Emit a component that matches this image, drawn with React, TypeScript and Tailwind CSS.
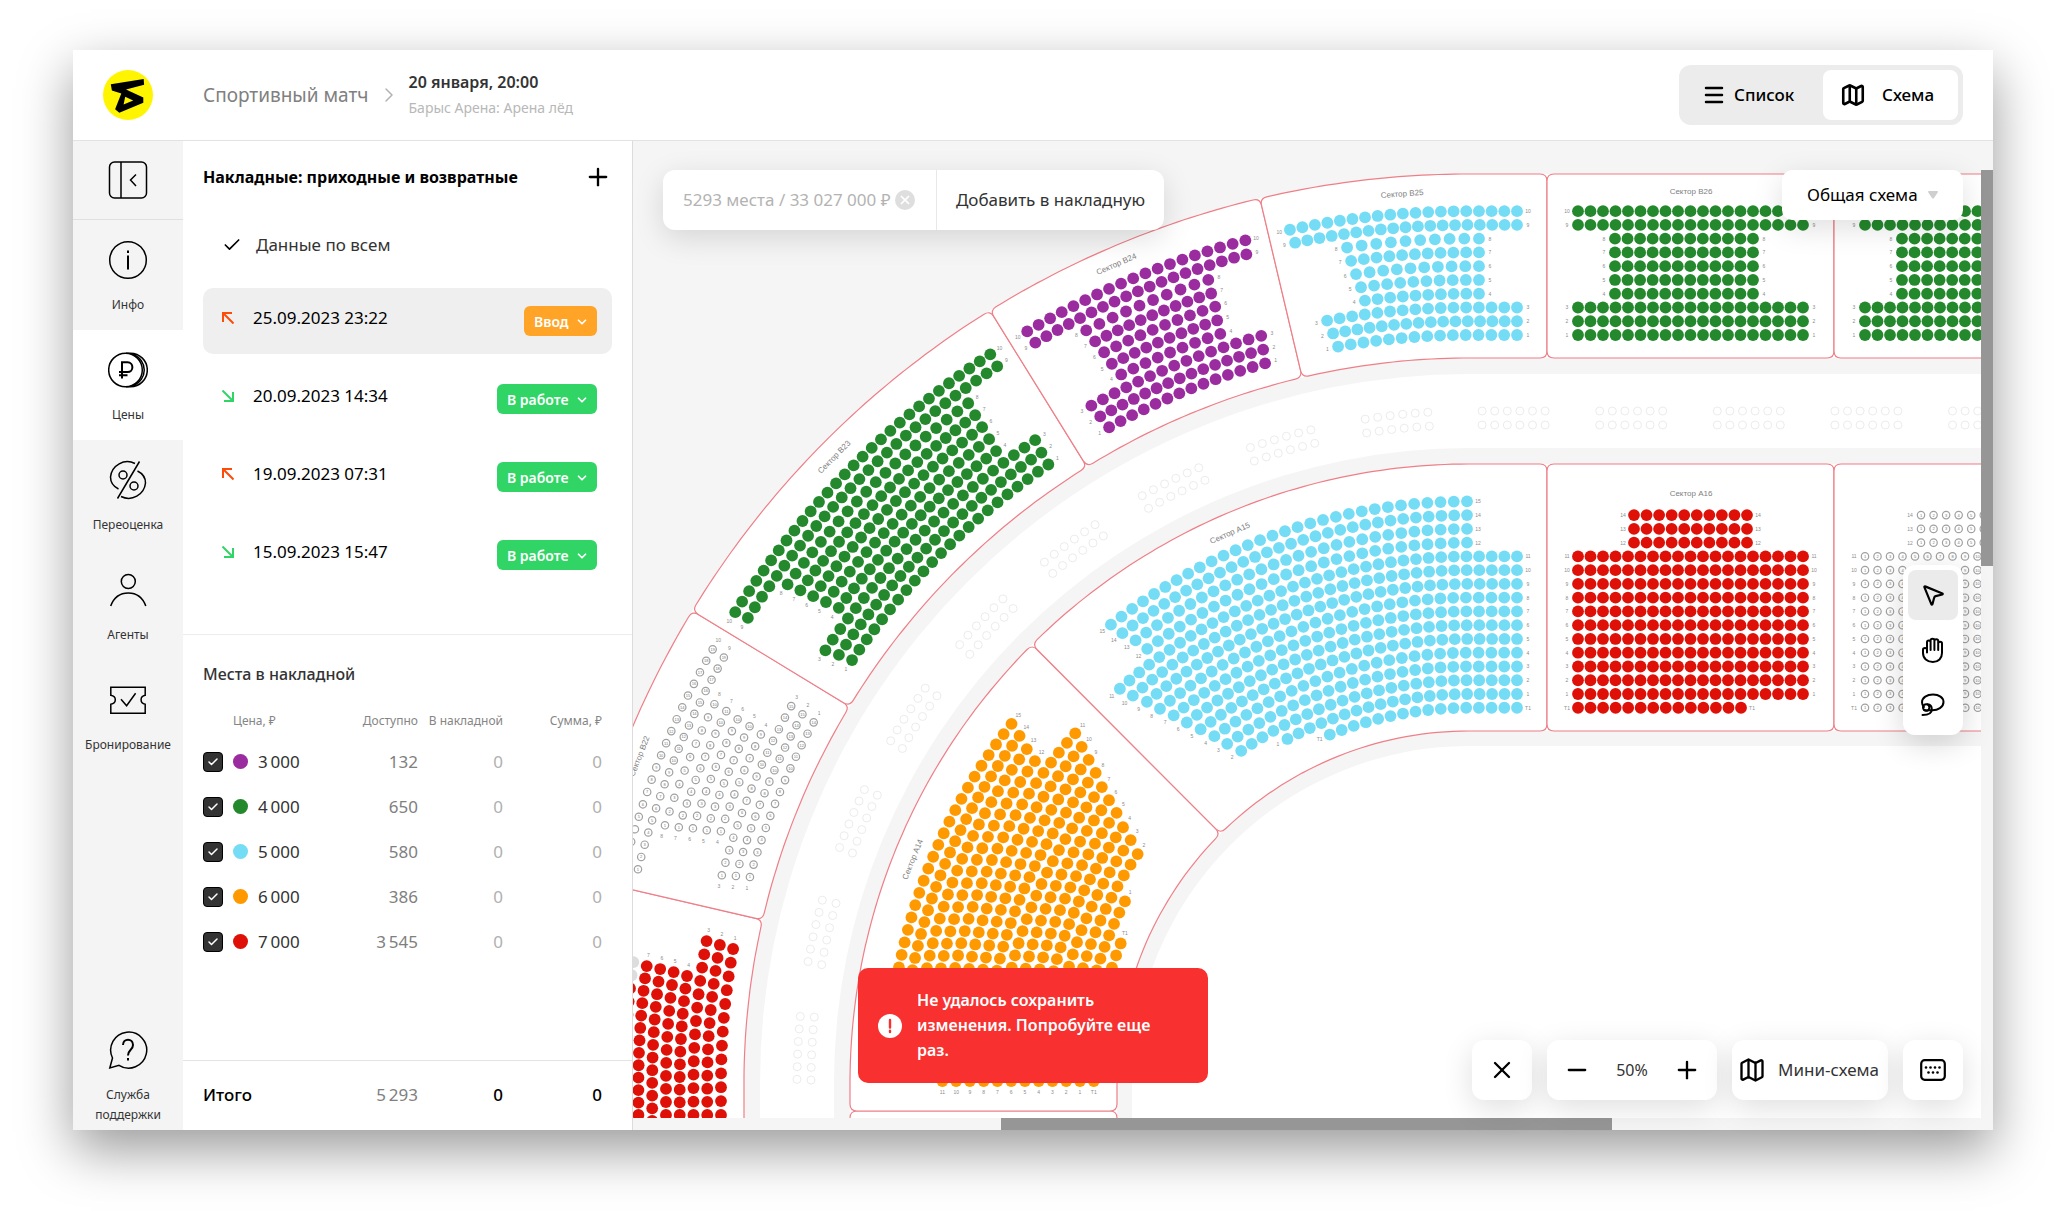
import type { ReactNode } from "react";
import { Check, ChevronDown, ChevronRight, Map as MapIcon, Menu, Minus, MousePointer2, Plus, X } from "lucide-react";

/* ---------- arena geometry ---------- */

// Centre of the top left bend. Past it the rows run straight right, below it straight down.
const CX = 1469;
const CY = 1083;

// Part of the arena that is scrolled into view
const VIEW = { left: 633, top: 141, right: 1981, bottom: 1118 };

type Point = [number, number];

const inView = ([x, y]: Point, margin: number) =>
  x > VIEW.left - margin && x < VIEW.right + margin && y < VIEW.bottom + margin;

// Distance along a row of radius r. 0 is the start of the bend, quarter(r) is its end.
const quarter = (r: number) => (Math.PI / 2) * r;

// u: 0..90 are degrees on the bend, values outside are pixels on the straight parts
const along = (u: number, r: number) => {
  if (u < 0) return u;
  if (u <= 90) return (u * Math.PI * r) / 180;
  return quarter(r) + u - 90;
};

const at = (s: number, r: number): Point => {
  const q = quarter(r);
  if (s < 0) return [CX - r, CY - s];
  if (s > q) return [CX + s - q, CY - r];
  return [CX - r * Math.cos(s / r), CY - r * Math.sin(s / r)];
};

const locate = (x: number, y: number, r: number) => {
  if (x >= CX) return quarter(r) + x - CX;
  if (y >= CY) return CY - y;
  return Math.atan2(CY - y, CX - x) * r;
};

const fmt = ([x, y]: Point) => `${x.toFixed(1)} ${y.toFixed(1)}`;

function arc(from: number, to: number, r: number) {
  const steps = Math.max(1, Math.ceil(Math.abs(to - from) / 8));
  return Array.from({ length: steps + 1 }, (_, i) => fmt(at(from + ((to - from) * i) / steps, r)));
}

function sectorPath(u1: number, u2: number, inner: number, outer: number) {
  const c = 7;
  const top = arc(along(u1, outer) + c, along(u2, outer) - c, outer);
  const bottom = arc(along(u2, inner) - c, along(u1, inner) + c, inner);
  const p = (u: number, r: number) => fmt(at(along(u, r), r));
  return [
    `M${top.join("L")}`,
    `Q${p(u2, outer)} ${p(u2, outer - c)}`,
    `L${p(u2, inner + c)}`,
    `Q${p(u2, inner)} ${bottom[0]}`,
    `L${bottom.join("L")}`,
    `Q${p(u1, inner)} ${p(u1, inner + c)}`,
    `L${p(u1, outer - c)}`,
    `Q${p(u1, outer)} ${top[0]}Z`,
  ].join("");
}

const zonePath = (r: number) => `M${CX - r} 3000V${CY}A${r} ${r} 0 0 1 ${CX} ${CY - r}H5000V3000Z`;

const ZONES = [
  { r: 909, fill: "#ffffff" },
  { r: 725, fill: "#f5f5f5" },
  { r: 709, fill: "#ffffff" },
  { r: 635, fill: "#f5f5f5" },
  { r: 619, fill: "#ffffff" },
  { r: 352, fill: "#f5f5f5" },
  { r: 337, fill: "#ffffff" },
];

/* ---------- sectors ---------- */

const PURPLE = "#9b2c9f";
const GREEN = "#24892c";
const BLUE = "#74dcf4";
const ORANGE = "#ff9900";
const RED = "#de1007";

// row number, first seat x/y, last seat x/y, seats
type Row = [number, number, number, number, number, number?];

type Sector = {
  name: string;
  ring: "A" | "B";
  from: number;
  to: number;
  label?: [number, number];
  color?: string;
  rows: Row[];
};

const RINGS = {
  A: { inner: 352, outer: 619, firstRow: 389 },
  B: { inner: 725, outer: 909, firstRow: 748 },
};

const rowRadius = (ring: "A" | "B", row: number) => RINGS[ring].firstRow + (row - 1) * 13.76;

const straightB = (x: number): Row[] =>
  [10, 9, 8, 7, 6, 5, 4, 3, 2, 1].map((n) =>
    n > 8 || n < 4 ? [n, x, 0, x + 225, 0, 19] : [n, x + 37, 0, x + 175, 0, 12],
  );

const straightA = (x: number): Row[] =>
  Array.from({ length: 15 }, (_, n): Row => {
    if (n > 11) return [n, x + 56, 0, x + 169, 0, 10];
    if (n === 0) return [n, x, 0, x + 163, 0, 14];
    return [n, x, 0, x + 225, 0, 19];
  });

const SECTORS: Sector[] = [
  {
    name: "B21", ring: "B", from: -400, to: 13, color: RED,
    rows: [
      [8, 625, 1121, 633, 962, 13],
      [7, 638, 1115, 646, 966, 13], [6, 652, 1121, 660, 969, 13], [5, 666, 1115, 673, 972, 12],
      [4, 680, 1115, 687, 976, 12], [3, 694, 1115, 706, 941, 14], [2, 707, 1115, 720, 945, 14],
      [1, 721, 1115, 733, 949, 13],
    ],
  },
  {
    name: "B22", ring: "B", from: 13, to: 31.3, label: [21.5, 892],
    rows: [
      [10, 624, 867, 712, 649, 19], [9, 637, 869, 723, 657, 19], [8, 664, 825, 714, 704, 10],
      [7, 678, 827, 726, 711, 11], [6, 692, 828, 737, 719, 10], [5, 706, 830, 749, 726, 10],
      [4, 720, 831, 760, 734, 9], [3, 721, 875, 791, 706, 15], [2, 736, 876, 802, 714, 15],
      [1, 750, 877, 813, 722, 14],
    ],
  },
  {
    name: "B23", ring: "B", from: 31.3, to: 58.2, label: [44.6, 892], color: GREEN,
    rows: [
      [10, 735, 612, 990, 354, 30], [9, 748, 618, 997, 366, 29], [8, 787, 584, 968, 403, 20],
      [7, 800, 590, 975, 415, 21], [6, 813, 596, 982, 427, 20], [5, 826, 602, 989, 439, 19],
      [4, 839, 608, 996, 451, 19], [3, 825, 650, 1035, 440, 24], [2, 839, 655, 1041, 452, 24],
      [1, 852, 660, 1048, 464, 23],
    ],
  },
  {
    name: "B24", ring: "B", from: 58.2, to: 76.7, label: [66.7, 892], color: PURPLE,
    rows: [
      [10, 1027, 331, 1245, 239, 19], [9, 1035, 342, 1246, 253, 19], [8, 1086, 330, 1208, 279, 10],
      [7, 1095, 341, 1211, 293, 11], [6, 1104, 352, 1215, 306, 10], [5, 1112, 364, 1217, 320, 10],
      [4, 1121, 374, 1220, 333, 9], [3, 1091, 405, 1261, 335, 15], [2, 1100, 416, 1263, 349, 15],
      [1, 1109, 427, 1265, 363, 14],
    ],
  },
  {
    name: "B25", ring: "B", from: 76.7, to: 168, label: [85.7, 892], color: BLUE,
    rows: [
      [10, 1290, 230, 1517, 0, 19], [9, 1295, 242, 1517, 0, 19], [8, 1347, 247, 1479, 0, 10],
      [7, 1351, 260, 1479, 0, 11], [6, 1356, 274, 1479, 0, 10], [5, 1361, 287, 1479, 0, 10],
      [4, 1365, 301, 1479, 0, 10], [3, 1327, 320, 1517, 0, 16], [2, 1333, 333, 1517, 0, 16],
      [1, 1338, 346, 1517, 0, 15],
    ],
  },
  { name: "B26", ring: "B", from: 168, to: 455, label: [312, 892], color: GREEN, rows: straightB(1578) },
  { name: "B27", ring: "B", from: 455, to: 1800, color: GREEN, rows: straightB(1865) },
  { name: "A13", ring: "A", from: -400, to: -28, rows: [] },
  {
    name: "A14", ring: "A", from: -28, to: 45.1, label: [21.9, 600], color: ORANGE,
    rows: [
      [15, 887, 1031, 1013, 725, 27], [14, 901, 1031, 1021, 737], [13, 915, 1031, 1028, 750],
      [12, 929, 1031, 1036, 762], [11, 943, 1081, 1076, 734], [10, 956, 1081, 1083, 748],
      [9, 970, 1081, 1090, 761], [8, 984, 1081, 1097, 774], [7, 998, 1081, 1103, 788],
      [6, 1011, 1081, 1110, 801], [5, 1025, 1081, 1118, 814], [4, 1039, 1081, 1124, 828],
      [3, 1053, 1081, 1132, 841], [2, 1067, 1081, 1139, 855], [1, 1080, 1081, 1126, 902],
      [0, 1094, 1081, 1122, 944],
    ],
  },
  {
    name: "A15", ring: "A", from: 45.1, to: 168, label: [66.5, 600], color: BLUE,
    rows: [
      [15, 1112, 626, 1467, 501, 30], [14, 1123, 634, 1467, 515, 30], [13, 1136, 641, 1467, 529, 28],
      [12, 1148, 650, 1467, 543, 27], [11, 1121, 690, 1517, 0], [10, 1134, 697, 1517, 0],
      [9, 1148, 703, 1517, 0], [8, 1161, 710, 1517, 0], [7, 1175, 717, 1517, 0],
      [6, 1188, 724, 1517, 0], [5, 1202, 731, 1517, 0], [4, 1215, 737, 1517, 0],
      [3, 1228, 745, 1517, 0], [2, 1242, 752, 1517, 0], [1, 1288, 740, 1517, 0],
      [0, 1330, 735, 1517, 0],
    ],
  },
  { name: "A16", ring: "A", from: 168, to: 455, label: [312, 590], color: RED, rows: straightA(1578) },
  { name: "A17", ring: "A", from: 455, to: 1800, rows: straightA(1865) },
];

// Suites between the rings: six by two seats each
const SUITES = [
  ...Array.from({ length: 9 }, (_, i) => 83.8 - i * 10.1),
  ...Array.from({ length: 10 }, (_, i) => 134.6 + i * 117.6),
];

function SeatRow({ sector, row }: { sector: Sector; row: Row }) {
  const [n, x1, y1, x2, y2, seats] = row;
  const r = rowRadius(sector.ring, n);
  const s1 = locate(x1, y1, r);
  const s2 = locate(x2, y2, r);
  const count = seats ?? Math.round((s2 - s1) / 12.6) + 1;
  const name = n === 0 ? "T1" : String(n);
  return (
    <g>
      {Array.from({ length: count }, (_, i) => {
        const point = at(s1 + ((s2 - s1) * i) / (count - 1), r);
        const [x, y] = point;
        if (!inView(point, 6)) return null;
        if (sector.color) {
          // the last two seats of B21 row 8 are already sold
          const sold = sector.name === "B21" && n === 8 && i > count - 3;
          return <circle key={i} cx={x} cy={y} r={5.9} fill={sold ? "#dddddd" : sector.color} />;
        }
        return (
          <g key={i}>
            <circle cx={x} cy={y} r={3.7} fill="none" stroke="#a0a0a0" strokeWidth={1.2} />
            {inView(point, -3) && <text x={x} y={y + 1.4} fontSize={4} fill="#777777">{i + 1}</text>}
          </g>
        );
      })}
      {[at(s1 - 11, r), at(s2 + 11, r)].map((point, i) =>
        inView(point, -3) ? (
          <text key={i} x={point[0]} y={point[1] + 2} fontSize={5} fill="#8c8c8c">{name}</text>
        ) : null,
      )}
    </g>
  );
}

function SectorShape({ sector }: { sector: Sector }) {
  const { inner, outer } = RINGS[sector.ring];
  const label = sector.label;
  const [lx, ly] = label ? at(along(label[0], label[1]), label[1]) : [0, 0];
  return (
    <g>
      <path d={sectorPath(sector.from, sector.to, inner, outer)} fill="#ffffff" stroke="#ee7f88" strokeWidth={1.2} />
      {sector.rows.map((row) => <SeatRow key={row[0]} sector={sector} row={row} />)}
      {label && (
        <text x={lx} y={ly + 3} fontSize={8} fill="#808080" transform={`rotate(${Math.min(label[0], 90) - 90} ${lx} ${ly})`}>
          {`Сектор ${sector.name}`}
        </text>
      )}
    </g>
  );
}

function Arena() {
  return (
    <svg className="block h-full w-full font-['Liberation_Sans',sans-serif]" textAnchor="middle" role="img" aria-label="Схема зала">
      <g transform={`translate(${-VIEW.left} ${-VIEW.top})`}>
        {ZONES.map((z) => <path key={z.r} d={zonePath(z.r)} fill={z.fill} />)}
        {SUITES.map((u) =>
          [672, 658].map((r) =>
            [-2.5, -1.5, -0.5, 0.5, 1.5, 2.5].map((k) => {
              const [x, y] = at(along(u, r) + k * 12.6, r);
              return <circle key={`${u}-${r}-${k}`} cx={x} cy={y} r={4} fill="none" stroke="#ececec" />;
            }),
          ),
        )}
        {SECTORS.map((s) => <SectorShape key={s.name} sector={s} />)}
      </g>
    </svg>
  );
}

/* ---------- icons ---------- */

function NavIcon({ children }: { children: ReactNode }) {
  return (
    <svg viewBox="0 0 40 40" className="size-10" fill="none" stroke="#000" strokeWidth={1.5}>
      {children}
    </svg>
  );
}

const Logo = () => (
  <svg viewBox="0 0 50 50" className="size-[50px]">
    <circle cx="25" cy="25" r="25" fill="#fff500" />
    <path fillRule="evenodd" d="M7.8 14.3 40.7 9l.4 5.8L23 19.4l17.3 8v5.4l-24 10-4.2-3.5 6.2-15.8-9.4-3zM22.2 26.8l-1.6 7.6 9.6-4z" />
  </svg>
);

const HandIcon = () => (
  <svg viewBox="0 0 22 26" className="h-[26px] w-[22px]" fill="none" stroke="#000" strokeWidth={2} strokeLinecap="round">
    <path d="M5 15.500V5.200c0-2.200 3.600-2.200 3.600 0V13M8.600 5V3.300c0-2.100 3.800-2.100 3.800 0V13M12.400 3.800c0-2.100 3.800-2.100 3.800 0V13M16.200 6.500c0-2.200 3.800-2.200 3.800 0V16c0 5.200-3.600 9-9.200 9S1 21.500 1 16v-3.500c0-2 4-2 4 0" />
  </svg>
);

const LassoIcon = () => (
  <svg viewBox="0 0 24 24" className="size-6" fill="none" stroke="#000" strokeWidth={2} strokeLinecap="round">
    <path d="M10.500 17.200c6.500.3 12-3 12-8.200C22.500 4.500 18 1.500 12 1.500S1 4.500 1 9.300c0 1.800.7 3.400 1.900 4.700" />
    <circle cx="5.200" cy="14.500" r="3.200" />
    <path d="M3 16.800c2 1.200 4.500.4 7.500.4M6.500 11.300c3 .2 4.300 2.700 4.300 5.200 0 4-3.500 5.500-9.300 5.500" />
  </svg>
);

const KeyboardIcon = () => (
  <svg viewBox="0 0 26 22" className="h-[22px] w-[26px]">
    <rect x="1.200" y="1.200" width="23.600" height="19.600" rx="3.500" fill="none" stroke="#000" strokeWidth="2.200" />
    {[6, 10.5, 15, 19.5].map((x) => <circle key={x} cx={x} cy="8.500" r="1.300" />)}
    {[8.5, 13, 17.5].map((x) => <circle key={x} cx={x} cy="13.500" r="1.300" />)}
  </svg>
);

function Arrow({ type }: { type: "in" | "out" }) {
  return (
    <svg viewBox="0 0 12 12" className="size-3" fill="none" strokeWidth={2} stroke={type === "out" ? "#fc4c0a" : "#31d566"}>
      <path d={type === "out" ? "M11.500 11.500 1 1M1 10V1h9" : "M.5.5 11 11M11 2v9H2"} />
    </svg>
  );
}

/* ---------- sidebar ---------- */

const NAV = [
  {
    title: "Инфо",
    icon: <><circle cx="20" cy="20" r="18.300" /><path d="M20 15.500v14M20 10.500v2.500" strokeWidth={2} /></>,
  },
  {
    title: "Цены",
    active: true,
    icon: (
      <>
        <circle cx="17.500" cy="20" r="16.800" />
        <path d="M18 3.200h4.500a16.800 16.800 0 0 1 0 33.600H18M25 4.500c15 5.500 15 25.500 0 31" />
        <path d="M14 28.500V12.300h5.500c6.500 0 6.500 9.700 0 9.700H11M11 25.300h8.500" strokeWidth={2} />
      </>
    ),
  },
  {
    title: "Переоценка",
    icon: (
      <>
        <path d="M27 3.500A17 17 0 0 0 2.500 17c0 5 3 9.500 8 12M13 36.500A17 17 0 0 0 37.500 23c0-5-3-9.500-8-12M31.500 1.500l-22 37" />
        <circle cx="15" cy="15" r="4" />
        <circle cx="26" cy="26" r="4" />
      </>
    ),
  },
  {
    title: "Агенты",
    icon: <><circle cx="20.300" cy="11.500" r="7" /><path d="M2.700 36C6 27 13 23 20.300 23S34.500 27 37.800 36" /></>,
  },
  {
    title: "Бронирование",
    icon: (
      <>
        <path d="M2.800 7.300h34.400v8c-5.500 1-5.500 8 0 9v8.900H2.800v-8.900c6-1 6-8 0-9z" />
        <path d="m13 19.300 5.600 6.500 9-12.500" />
      </>
    ),
  },
];

function Sidebar() {
  return (
    <nav className="flex w-[110px] shrink-0 flex-col bg-[#f4f4f4] text-[12px] leading-5 text-[#333]">
      <button aria-label="Свернуть меню" className="flex h-[79px] shrink-0 items-center justify-center border-b border-[#e0e0e0]">
        <NavIcon>
          <rect x="1.500" y="2" width="37" height="36" rx="5" />
          <path d="M13 2v36M28 14.500 22.500 20l5.500 6" />
        </NavIcon>
      </button>
      {NAV.map((item) => (
        <a
          key={item.title}
          href="#"
          className={`flex h-[110px] shrink-0 flex-col items-center gap-[15px] pt-5 ${item.active ? "bg-white" : ""}`}
        >
          <NavIcon>{item.icon}</NavIcon>
          {item.title}
        </a>
      ))}
      <a href="#" className="mt-auto flex flex-col items-center gap-[15px] pb-[5px] text-center">
        <NavIcon>
          <path d="m4.500 28-2.700 10 9.200-2.700A18 18 0 1 0 4.500 28z" />
          <path d="M15 15c0-7 10-7 10 0 0 5-5 4.500-5 10.500M20 28v2.500" strokeWidth={2} />
        </NavIcon>
        <span className="w-20">Служба поддержки</span>
      </a>
    </nav>
  );
}

/* ---------- invoices panel ---------- */

const INVOICES = [
  { date: "25.09.2023 23:22", type: "out", status: "Ввод" },
  { date: "20.09.2023 14:34", type: "in", status: "В работе" },
  { date: "19.09.2023 07:31", type: "out", status: "В работе" },
  { date: "15.09.2023 15:47", type: "in", status: "В работе" },
] as const;

// thousands are set apart with a thin space
const PRICES = [
  { price: "3\u2009000", available: "132", dot: "bg-[#9b2c9f]" },
  { price: "4\u2009000", available: "650", dot: "bg-[#24892c]" },
  { price: "5\u2009000", available: "580", dot: "bg-[#74dcf4]" },
  { price: "6\u2009000", available: "386", dot: "bg-[#ff9900]" },
  { price: "7\u2009000", available: "3\u2009545", dot: "bg-[#de1007]" },
];

function StatusSelect({ status }: { status: string }) {
  const draft = status === "Ввод";
  return (
    <div className="relative">
      <select
        aria-label="Статус накладной"
        defaultValue={status}
        className={`h-[30px] appearance-none rounded-md pl-2.5 text-[14px] font-semibold text-white ${draft ? "w-[73px] bg-[#ffa426]" : "w-[100px] bg-[#31d566]"}`}
      >
        <option>{status}</option>
      </select>
      <ChevronDown className="pointer-events-none absolute top-[9px] right-2 size-3.5 text-white" strokeWidth={3} />
    </div>
  );
}

function Columns() {
  return (
    <colgroup>
      <col className="w-[130px]" />
      <col className="w-[85px]" />
      <col className="w-[85px]" />
      <col />
    </colgroup>
  );
}

function InvoicesPanel() {
  return (
    <aside className="flex w-[450px] shrink-0 flex-col border-r border-[#dcdcdc]">
      <section className="border-b border-[#ececec] px-5 pt-5 pb-[46px]">
        <div className="flex h-8 items-center justify-between">
          <h2 className="text-[16px] font-bold">Накладные: приходные и возвратные</h2>
          <button aria-label="Добавить накладную"><Plus className="size-7" strokeWidth={2} /></button>
        </div>
        <button className="mt-10 mb-[31px] flex h-6 items-center gap-3.5 pl-[19px] text-[17px] text-[#333]">
          <Check className="size-5 text-black" strokeWidth={2} />
          Данные по всем
        </button>
        <ul className="flex flex-col gap-3">
          {INVOICES.map((inv, i) => (
            <li key={inv.date} className={`flex h-[66px] items-start rounded-[10px] pt-[18px] pr-[15px] pl-[19px] ${i === 0 ? "bg-[#efefef]" : ""}`}>
              <div className="flex h-6 flex-1 items-center gap-[19px] text-[17px]">
                <Arrow type={inv.type} />
                {inv.date}
              </div>
              <StatusSelect status={inv.status} />
            </li>
          ))}
        </ul>
      </section>

      <section className="flex-1 pt-[27px] pr-[30px] pl-5">
        <h2 className="text-[16px] leading-6 font-medium text-[#333]">Места в накладной</h2>
        <table className="mt-4 w-full table-fixed text-right text-[17px]">
          <Columns />
          <thead>
            <tr className="h-[37px] text-[12px] whitespace-nowrap text-[#858585]">
              <th className="pl-[30px] text-left font-normal">Цена, ₽</th>
              <th className="font-normal">Доступно</th>
              <th className="font-normal">В накладной</th>
              <th className="font-normal">Сумма, ₽</th>
            </tr>
          </thead>
          <tbody>
            {PRICES.map((p) => (
              <tr key={p.price} className="h-[45px] text-[#b0b0b0]">
                <td className="text-left text-[#333]">
                  <label className="flex items-center gap-2.5">
                    <span className="relative size-5">
                      <input type="checkbox" defaultChecked className="block size-5 appearance-none rounded border border-black bg-[#333]" />
                      <Check className="pointer-events-none absolute top-1 left-1 size-3 text-white" strokeWidth={3} />
                    </span>
                    <span className={`size-[15px] rounded-full ${p.dot}`} />
                    {p.price}
                  </label>
                </td>
                <td className="text-[#808080]">{p.available}</td>
                <td>0</td>
                <td>0</td>
              </tr>
            ))}
          </tbody>
        </table>
      </section>

      <div className="h-[70px] shrink-0 border-t border-[#e4e4e4] pr-[30px] pl-5">
        <table className="w-full table-fixed text-right text-[17px] font-medium">
          <Columns />
          <tbody>
            <tr className="h-[68px]">
              <th className="text-left font-medium">Итого</th>
              <td className="font-normal text-[#808080]">{"5\u2009293"}</td>
              <td>0</td>
              <td>0</td>
            </tr>
          </tbody>
        </table>
      </div>
    </aside>
  );
}

/* ---------- map ---------- */

function SchemeView() {
  return (
    <main className="relative grid min-w-0 flex-1 grid-cols-[minmax(0,1fr)_12px] grid-rows-[minmax(0,1fr)_12px] bg-[#f5f5f5]">
      <div className="overflow-hidden"><Arena /></div>
      <div className="pt-[29px]"><div className="h-[396px] bg-[#969696]" /></div>
      <div className="pl-[368px]"><div className="h-3 w-[611px] bg-[#969696]" /></div>

      <div className="absolute top-[29px] left-[30px] flex h-[60px] rounded-xl bg-white text-[17px] shadow-[0_8px_30px_rgba(0,0,0,0.13)]">
        <div className="flex w-[274px] items-center gap-1 border-r border-[#e8e8e8] pl-5 whitespace-nowrap text-[#b3b3b3]">
          5293 места / 33 027 000 ₽
          <button aria-label="Сбросить" className="flex size-5 items-center justify-center rounded-full bg-[#dedede] text-white">
            <X className="size-3.5" strokeWidth={3} />
          </button>
        </div>
        <button className="w-[227px] text-[#333]">Добавить в накладную</button>
      </div>

      <div className="absolute top-[29px] right-[30px]">
        <select aria-label="Схема" className="h-[50px] w-[181px] appearance-none rounded-[10px] bg-white pl-[25px] text-[17px] shadow-[0_8px_30px_rgba(0,0,0,0.13)]">
          <option>Общая схема</option>
        </select>
        <svg viewBox="0 0 10 8" className="pointer-events-none absolute top-[21px] right-[25px] h-2 w-2.5" fill="#cfcfcf">
          <path d="M1 0h8c1 0 1.200.8.700 1.500L6 7c-.5.800-1.500.8-2 0L.3 1.500C-.2.800 0 0 1 0z" />
        </svg>
      </div>

      <div className="absolute top-[424px] right-[30px] flex flex-col gap-[5px] rounded-xl bg-white p-[5px] shadow-[0_8px_30px_rgba(0,0,0,0.16)]">
        <button aria-label="Выбор" className="flex size-[50px] items-center justify-center rounded-lg bg-[#ebebeb]">
          <MousePointer2 className="size-[26px]" strokeWidth={2} />
        </button>
        <button aria-label="Рука" className="flex size-[50px] items-center justify-center"><HandIcon /></button>
        <button aria-label="Лассо" className="flex size-[50px] items-center justify-center"><LassoIcon /></button>
      </div>

      <div className="absolute right-[30px] bottom-[30px] flex h-[60px] gap-[15px] text-[17px] text-[#333] *:rounded-xl *:bg-white *:shadow-[0_8px_30px_rgba(0,0,0,0.13)]">
        <button aria-label="Закрыть" className="flex w-[60px] items-center justify-center text-black">
          <X className="size-7" strokeWidth={2} />
        </button>
        <div className="flex w-[170px] items-center justify-between px-4 text-[16px]">
          <button aria-label="Уменьшить" className="text-black"><Minus className="size-7" strokeWidth={2} /></button>
          50%
          <button aria-label="Увеличить" className="text-black"><Plus className="size-7" strokeWidth={2} /></button>
        </div>
        <button className="flex w-[156px] items-center gap-3 pl-1.5">
          <MapIcon className="size-7 text-black" strokeWidth={2} />
          Мини-схема
        </button>
        <button aria-label="Клавиатура" className="flex w-[60px] items-center justify-center"><KeyboardIcon /></button>
      </div>
    </main>
  );
}

function Header() {
  return (
    <header className="flex h-[91px] shrink-0 items-center border-b border-[#e2e2e2] px-[30px]">
      <Logo />
      <a href="#" className="ml-[50px] text-[19px] text-[#808080]">Спортивный матч</a>
      <ChevronRight className="mx-2 size-6 text-[#b3b3b3]" strokeWidth={1.5} />
      <div>
        <p className="text-[16px] leading-[26px] font-semibold text-[#333]">20 января, 20:00</p>
        <p className="text-[14px] leading-[26px] text-[#b8b8b8]">Барыс Арена: Арена лёд</p>
      </div>
      <div className="ml-auto flex h-[60px] w-[284px] items-center rounded-xl bg-[#ececec] p-[5px] text-[17px] font-medium">
        <button className="flex flex-1 items-center gap-2 pl-[18px]">
          <Menu className="size-6" strokeWidth={2.5} />
          Список
        </button>
        <button className="flex h-[50px] w-[135px] items-center gap-4 rounded-lg bg-white pl-[17px]">
          <MapIcon className="size-[26px]" strokeWidth={2.4} />
          Схема
        </button>
      </div>
    </header>
  );
}

export default function App() {
  return (
    <div className="h-screen overflow-hidden bg-white px-[73px] pt-[50px] pb-[93px] font-['Noto_Sans','Open_Sans',sans-serif] text-black">
      <div className="relative flex h-full flex-col bg-white shadow-[0_20px_50px_rgba(0,0,0,0.4)]">
        <Header />
        <div className="flex min-h-0 flex-1">
          <Sidebar />
          <InvoicesPanel />
          <SchemeView />
        </div>
        <div role="alert" className="absolute bottom-[47px] left-1/2 flex w-[350px] -translate-x-1/2 items-center gap-[15px] rounded-[10px] bg-[#f93030] py-5 pr-8 pl-5 text-[16px] leading-[25px] font-semibold text-white">
          <svg viewBox="0 0 24 24" className="size-6 shrink-0">
            <circle cx="12" cy="12" r="12" fill="#fff" />
            <path d="M12 6v7.500M12 16.800v1.200" stroke="#f93030" strokeWidth={2.4} strokeLinecap="round" />
          </svg>
          Не удалось сохранить изменения. Попробуйте еще раз.
        </div>
      </div>
    </div>
  );
}
